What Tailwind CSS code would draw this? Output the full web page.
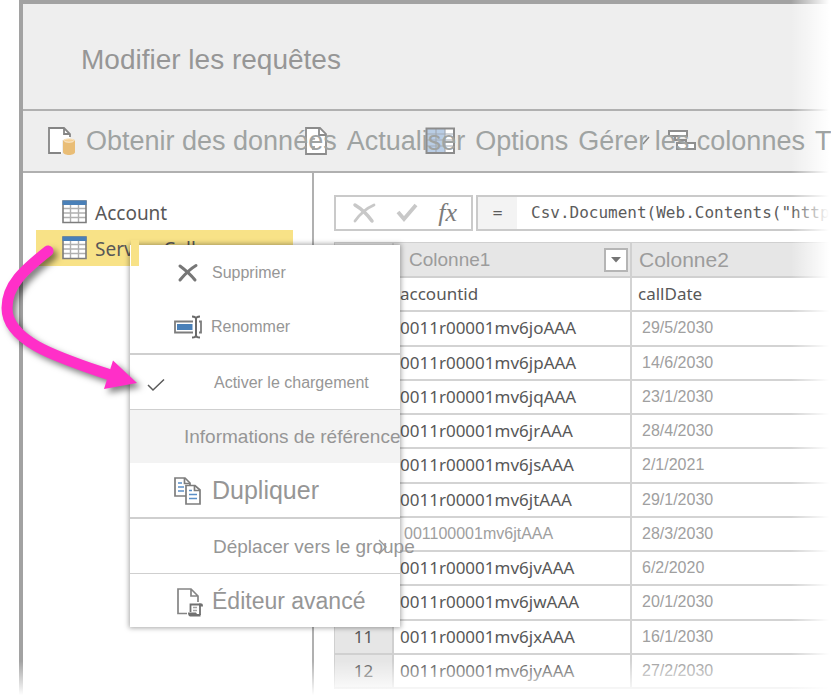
<!DOCTYPE html>
<html lang="fr">
<head>
<meta charset="utf-8">
<title>Modifier les requêtes</title>
<script src="https://cdn.jsdelivr.net/npm/@tailwindcss/browser@4"></script>
</head>
<body class="bg-white font-['Liberation_Sans',Arial,sans-serif]">
<div class="relative h-screen w-full overflow-hidden pl-[19px]">
  <div class="flex h-full flex-col border-t-4 border-l-4 border-[#a2a2a2]">
    <header class="flex h-[107px] shrink-0 items-center border-b-2 border-[#b0b0b0] bg-[#eeeeee] pt-1.5 pl-[58px]">
      <h1 class="whitespace-nowrap text-[28px] leading-8 text-[#969696]">Modifier les requêtes</h1>
    </header>
    <nav class="h-[62px] shrink-0 border-b-2 border-[#b0b0b0] bg-[#eeeeee]" aria-label="Outils">
      <div class="relative z-20 flex h-full items-center gap-2.5 whitespace-nowrap pl-6 text-[27px] leading-8 text-[#9fa3a2]">
        <button class="flex items-center gap-2.5">
          <svg class="h-[30px] w-[29px] shrink-0" viewBox="0 0 29 30" fill="none"><path d="M2 1.700H17L23 7.500V27.500H2Z" fill="#fff"/><path d="M14 27H2V2H17L23 8V11M17 2V8H23" stroke="#858585" stroke-width="1.800"/><path d="M15 14H28V29H15Z" fill="#eee"/><path d="M16 15C16 11.500 28 11.500 28 15V26C28 30 16 30 16 26Z" fill="#e9bd76"/><ellipse cx="22" cy="14.500" rx="5" ry="1.800" fill="#f5cf92" stroke="#fff" stroke-width=".6"/></svg>
          <span>Obtenir des données</span>
        </button>
        <button>Actualiser</button>
        <button>Options</button>
        <button>Gérer les colonnes</button>
        <button>T</button>
        <svg class="absolute top-4 left-[281px] -z-10 h-7 w-6" viewBox="0 0 24 28" fill="none"><path d="M2 1H16L22 7V27H2Z" fill="#fff" stroke="#8c8c8c" stroke-width="1.800"/><path d="M15 1V8H22" stroke="#8c8c8c" stroke-width="1.800"/><path d="M7 14a3 3 0 0 1 4-2M7 20h4m-3 2h3" stroke="#aaa" stroke-width="2"/></svg>
        <svg class="absolute top-4 left-[402px] -z-10 h-7 w-[30px]" viewBox="0 0 30 28" fill="none"><path d="M1.500 1.500H29V26H1.500Z" fill="#fff"/><path d="M2 2H20V26H2Z" fill="#b9cde5"/><path d="M2 7H29M2 13H29M2 19H29M11 1V26M20 1V26" stroke="#a3abb5" stroke-width="1.200"/><path d="M1.500 1.500H29V26H1.500Z" stroke="#8c8c8c" stroke-width="2"/></svg>
        <svg class="absolute top-6 left-[617px] -z-10 h-3 w-3" viewBox="0 0 12 12" fill="none"><path d="M3 9 9 2" stroke="#858585" stroke-width="1.400"/></svg>
        <svg class="absolute top-[18px] left-[644px] -z-10 h-6 w-8" viewBox="0 0 32 24" fill="none" stroke="#8f8f8f" stroke-width="2"><path d="M2 2H20V7H2Z" fill="#fff"/><path d="M10 14H28V20H10Z" fill="#fff"/><path d="M8 7V11H19V14"/></svg>
      </div>
    </nav>
    <div class="flex min-h-0 grow">
      <aside class="w-[291px] shrink-0 border-r-2 border-[#b0b0b0] pt-[21px] pr-[19px] pl-[13px] font-['Noto_Sans','Open_Sans',sans-serif] text-[19px] leading-6 text-[#585858]">
        <button class="flex h-9 w-full items-center gap-2 pl-[26px]">
          <svg class="h-6 w-[25px]" viewBox="0 0 25 24"><path d="M1 1H24V22.500H1Z" fill="#fff"/><path d="M1 8.500H24M1 13H24M1 17.500H24M8.500 5V22M16.500 5V22" stroke="#b0b0b0" stroke-width="1.400"/><path d="M1 1H24V22.500H1Z" fill="none" stroke="#7d7d7d" stroke-width="1.600"/><path d="M.5 .5H24.500V5H.5Z" fill="#4a80b8"/></svg>
          <span class="pt-0.5">Account</span>
        </button>
        <button class="flex h-9 w-full items-center gap-2 whitespace-nowrap bg-[#f8e287] pl-[26px]">
          <svg class="h-6 w-[25px]" viewBox="0 0 25 24"><path d="M1 1H24V22.500H1Z" fill="#fff"/><path d="M1 8.500H24M1 13H24M1 17.500H24M8.500 5V22M16.500 5V22" stroke="#b0b0b0" stroke-width="1.400"/><path d="M1 1H24V22.500H1Z" fill="none" stroke="#7d7d7d" stroke-width="1.600"/><path d="M.5 .5H24.500V5H.5Z" fill="#4a80b8"/></svg>
          <span class="pt-0.5">Service Calls</span>
        </button>
      </aside>
      <main class="min-w-0 grow pt-[22px] pl-5">
        <div class="flex gap-[3px]">
          <div class="flex h-9 w-[139px] shrink-0 items-center justify-between border-2 border-[#cacaca] pr-3.5 pl-4">
            <button aria-label="Annuler"><svg class="h-[22px] w-6" viewBox="0 0 24 22" fill="none" stroke="#c8c8c8" stroke-linecap="round"><path d="M3 3C8 6 15 12 20 19" stroke-width="3.500"/><path d="M22 3C15 6 8 12 3 19" stroke-width="2.800"/></svg></button>
            <button aria-label="Valider"><svg class="h-[22px] w-6" viewBox="0 0 24 22" fill="none" stroke="#c8c8c8" stroke-width="3.800"><path d="M3 10 9 17 21 3"/></svg></button>
            <button class="font-['Liberation_Serif',serif] text-[26px] leading-7 text-[#7c7c7c] italic">fx</button>
          </div>
          <label class="flex h-9 grow items-center border-2 border-r-0 border-[#cacaca] font-['DejaVu_Sans_Mono',monospace] text-base text-[#5c5c5c]">
            <span class="flex h-full w-[39px] shrink-0 items-center justify-center bg-[#f3f3f3]">=</span>
            <input class="w-full min-w-0 grow pl-3.5 outline-none" aria-label="Formule" value="Csv.Document(Web.Contents(&quot;https://">
          </label>
        </div>
        <table class="mt-[11px] h-[447px] w-full table-fixed border-separate border-spacing-0 font-['Noto_Sans','Open_Sans',sans-serif] text-[17px] leading-6 whitespace-nowrap text-[#585858] [&_td]:h-[34px] [&_td]:border-r-2 [&_td]:border-b-2 [&_td]:border-[#d3d3d3] [&_td]:pl-1.5 [&_td:last-child]:border-r-0 [&_th]:border-r-2 [&_th]:border-b-2 [&_th]:border-[#d0d0d0] [&_th]:bg-[#e6e6e6] [&_th]:font-normal [&_th:last-child]:border-r-0 [&_.d]:pl-2.5 [&_.d]:font-['Liberation_Sans',Arial,sans-serif] [&_.d]:text-base [&_.d]:text-[#a0a0a0]">
          <colgroup><col class="w-[60px]"><col class="w-[238px]"><col></colgroup>
          <thead class="font-['Liberation_Sans',Arial,sans-serif] text-left text-[#9c9c9c]">
            <tr class="h-9">
              <th class="border-t border-l"></th>
              <th class="border-t pl-[15px]"><div class="flex items-center justify-between pr-0.5 text-[19px]">Colonne1
                <button class="flex size-6 items-center justify-center border-2 border-[#b5b5b5] bg-white" aria-label="Filtrer Colonne1"><svg class="h-1.5 w-2.5" viewBox="0 0 10 6"><path d="M0 0H10L5 5.500Z" fill="#757575"/></svg></button></div></th>
              <th class="border-t pl-[7px] text-[21px]">Colonne2</th>
            </tr>
          </thead>
          <tbody>
            <tr><th class="border-l">1</th><td>accountid</td><td>callDate</td></tr>
            <tr><th class="border-l">2</th><td>0011r00001mv6joAAA</td><td class="d">29/5/2030</td></tr>
            <tr><th class="border-l">3</th><td>0011r00001mv6jpAAA</td><td class="d">14/6/2030</td></tr>
            <tr><th class="border-l">4</th><td>0011r00001mv6jqAAA</td><td class="d">23/1/2030</td></tr>
            <tr><th class="border-l">5</th><td>0011r00001mv6jrAAA</td><td class="d">28/4/2030</td></tr>
            <tr><th class="border-l">6</th><td>0011r00001mv6jsAAA</td><td class="d">2/1/2021</td></tr>
            <tr><th class="border-l">7</th><td>0011r00001mv6jtAAA</td><td class="d">29/1/2030</td></tr>
            <tr><th class="border-l">8</th><td class="d">001100001mv6jtAAA</td><td class="d">28/3/2030</td></tr>
            <tr><th class="border-l">9</th><td>0011r00001mv6jvAAA</td><td class="d">6/2/2020</td></tr>
            <tr><th class="border-l">10</th><td>0011r00001mv6jwAAA</td><td class="d">20/1/2030</td></tr>
            <tr><th class="border-l">11</th><td>0011r00001mv6jxAAA</td><td class="d">16/1/2030</td></tr>
            <tr><th class="border-l">12</th><td>0011r00001mv6jyAAA</td><td class="d">27/2/2030</td></tr>
          </tbody>
        </table>
      </main>
    </div>
  </div>

  <!-- Fade-out at the right and bottom edges -->
  <div class="pointer-events-none absolute inset-y-0 right-0 z-10 w-10 bg-linear-to-r from-white/0 to-white to-95%"></div>
  <div class="pointer-events-none absolute inset-x-0 bottom-0 z-10 h-9 bg-linear-to-b from-white/0 to-white to-95%"></div>

  <!-- Context menu -->
  <div role="menu" class="absolute top-[245px] left-[130px] z-30 w-[270px] bg-white whitespace-nowrap text-[#969696] shadow-[0_0_5px_1px_rgba(0,0,0,0.35)] [&>button]:relative [&>button]:flex [&>button]:h-[54px] [&>button]:w-full [&>button]:items-center [&>button]:pt-0.5 [&>hr]:border-t-2 [&>hr]:border-[#cfcfcf]">
    <button role="menuitem" class="pl-[82px] text-base">
      <svg class="absolute left-[47px] h-5 w-[22px]" viewBox="0 0 22 20" fill="none" stroke="#777" stroke-linecap="round"><path d="M3 3C7 6 14 12 18 17" stroke-width="3"/><path d="M19 2.500C13 6 8 11 3 17" stroke-width="3"/></svg>
      Supprimer</button>
    <button role="menuitem" class="pl-[81px] text-base">
      <svg class="absolute left-11 h-6 w-7" viewBox="0 0 28 24" fill="none"><path d="M19 6.500H1V17.500H19M25 6.500H27V17.500H25" stroke="#7d7d7d" stroke-width="1.800"/><path d="M3 9H18.500V15H3Z" fill="#4a80b8"/><path d="M18 1.500C20 1.500 22 2 22 4C22 2 24 1.500 26 1.500M18 22.500C20 22.500 22 22 22 20C22 22 24 22.500 26 22.500M22 4V20" stroke="#6b6b6b" stroke-width="2"/></svg>
      Renommer</button>
    <hr>
    <button role="menuitemcheckbox" aria-checked="true" class="pl-[84px] text-base">
      <svg class="absolute left-[17px] mt-1 h-3.5 w-[18px]" viewBox="0 0 18 14" fill="none"><path d="M1 7 6 12 17 1.500" stroke="#5a5a5a" stroke-width="1.500"/></svg>
      Activer le chargement</button>
    <button role="menuitem" class="border-t border-[#cfcfcf] bg-[#f3f3f3] pl-[54px] text-[19px]">Informations de référence</button>
    <button role="menuitem" class="pl-[82px] text-[25px]">
      <svg class="absolute left-11 h-7 w-[27px]" viewBox="0 0 27 28" fill="none" stroke-width="1.700"><path d="M1 1H11L16 6V19H1Z" fill="#fff" stroke="#7d7d7d"/><path d="M10.500 1V6.500H16" stroke="#7d7d7d"/><path d="M4 6H8M4 10H10M4 14H10" stroke="#5b8fc7"/><path d="M12 8.500H21L26 13V27H12Z" fill="#fff" stroke="#7d7d7d"/><path d="M20.500 8.500V13.500H26" stroke="#7d7d7d"/><path d="M15 13.500H18M15 17.500H23M15 21.500H23" stroke="#5b8fc7"/></svg>
      Dupliquer</button>
    <hr>
    <button role="menuitem" aria-haspopup="true" class="pl-[83px] text-[19px]">
      <svg class="absolute top-5 left-[248px] h-4 w-2.5" viewBox="0 0 10 16" fill="none"><path d="M1 1 8 8 1 15" stroke="#999" stroke-width="1.400"/></svg>
      Déplacer vers le groupe</button>
    <button role="menuitem" class="border-t border-[#cfcfcf] pl-[82px] text-[23px]">
      <svg class="absolute left-[46px] h-[30px] w-7" viewBox="0 0 28 30" fill="none"><path d="M11 26.500H2V2H15L22 9V15M15 2V9H22" stroke="#858585" stroke-width="1.700"/><path d="M14.500 25V17.500H24V28" fill="#fff" stroke="#707070" stroke-width="1.800"/><path d="M17 20.500H21M17 23.500H21" stroke="#a5a5a5" stroke-width="1.400"/><path d="M12 25.500H20L21 27H24.500V29.500H14Q12 29 12 25.500ZM23 16.500H26Q27 17 27 19.500H23Z" fill="#707070"/></svg>
      Éditeur avancé</button>
  </div>
  <div class="absolute top-[240px] left-[131px] z-30 h-[26px] w-2 bg-[#f8e287]"></div>

  <!-- Callout arrow from the query to the checked menu entry -->
  <svg class="absolute top-[235px] left-0 z-40 h-[170px] w-[150px] drop-shadow-[4px_4px_3px_rgba(0,0,0,0.5)]" viewBox="0 235 150 170" fill="none"><path d="M48 251C24 270 7 285 7 308C7 342 60 358 110 375" stroke="#ff2fc8" stroke-width="11" stroke-linecap="round"/><path d="M137 383 113 360.500 104 389Z" fill="#ff2fc8"/></svg>
</div>
</body>
</html>
